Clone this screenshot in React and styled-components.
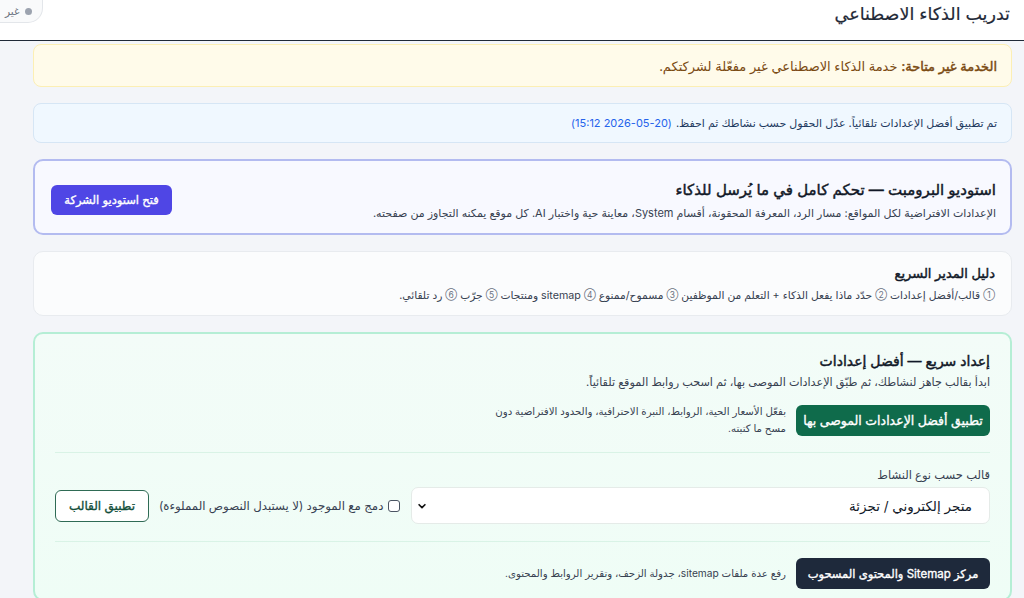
import React from 'react';
import styled, { createGlobalStyle, css } from 'styled-components';

const Global = createGlobalStyle`
  html, body {
    margin: 0;
    padding: 0;
    background: #f3f5f9;
    font-family: Inter, "Noto Sans", "DejaVu Sans", sans-serif;
    color: #1f2937;
  }
  * { box-sizing: border-box; }
`;

// the only Arabic face installed is wide in bold, so fake a semibold on the regular cut
const heavy = css`
  font-weight: 400;
  -webkit-text-stroke: ${p => p.$stroke || 0.45}px currentColor;
`;

const Header = styled.header`
  height: 41px;
  background: #fff;
  border-bottom: 1px solid #1f2937;
  display: flex;
  align-items: flex-start;
  justify-content: space-between;
  padding: 0 14px 0 0;
`;

const Title = styled.h1`
  margin: 3px 0 0;
  font-size: 17.5px;
  font-weight: 400;
  -webkit-text-stroke: 0.2px currentColor;
  color: #1f2937;
`;

const Toggle = styled.div`
  margin-top: -8px;
  height: 31px;
  padding: 8px 10px 0 5px;
  display: flex;
  align-items: center;
  gap: 6px;
  background: #f9fafb;
  border: 1px solid #e3e6ea;
  border-left: none;
  border-radius: 0 0 15px 0;
  font-size: 10.5px;
  color: #6b7280;
`;

const Dot = styled.span`
  width: 7px;
  height: 7px;
  border-radius: 50%;
  background: #9ca3af;
`;

const Main = styled.main`
  padding: 3px 12px 0 33px;
  display: flex;
  flex-direction: column;
  gap: 16px;
`;

const Alert = styled.div`
  height: ${p => p.$h}px;
  border-radius: 8px;
  border: 1px solid ${p => p.$border};
  background: ${p => p.$bg};
  display: flex;
  align-items: center;
  padding: 0 14px;
  font-size: ${p => p.$fs}px;
  color: ${p => p.$color};
`;

const Strong = styled.b`
  ${heavy}
  margin-left: 4px;
`;

const Stamp = styled.span`
  color: #2563eb;
  margin-right: 4px;
`;

const Card = styled.section`
  border-radius: 10px;
  border: ${p => p.$border};
  background: ${p => p.$bg};
  padding: ${p => p.$pad};
  height: ${p => p.$h ? `${p.$h}px` : 'auto'};
  flex-shrink: 0;
`;

const StudioRow = styled.div`
  display: flex;
  align-items: center;
  justify-content: space-between;
`;

const CardTitle = styled.h2`
  ${heavy}
  margin: 0 0 ${p => p.$mb || 6}px;
  font-size: ${p => p.$fs}px;
  color: #111827;
`;

const Sub = styled.p`
  margin: 0;
  font-size: ${p => p.$fs || 11}px;
  color: #374151;
`;

const Num = styled.span`
  font-size: 8.5px;
  color: #6b7280;
  vertical-align: 1px;
`;

const Button = styled.button`
  ${heavy}
  font-family: inherit;
  border: ${p => p.$outline ? '1px solid #2f6b55' : 'none'};
  border-radius: 6px;
  background: ${p => p.$bg};
  color: ${p => p.$outline ? '#134e3a' : '#fff'};
  font-size: ${p => p.$fs || 12}px;
  height: ${p => p.$h || 30}px;
  width: ${p => p.$w}px;
  padding: 0;
  white-space: nowrap;
  cursor: pointer;
  flex-shrink: 0;
`;

const Divider = styled.hr`
  border: none;
  border-top: 1px solid #d9f3e6;
  margin: ${p => p.$m};
`;

const ActionRow = styled.div`
  display: flex;
  align-items: center;
  gap: 10px;
  margin-top: ${p => p.$mt || 0}px;
`;

const Hint = styled.p`
  margin: 0;
  font-size: 10.2px;
  line-height: 17px;
  color: #374151;
  width: ${p => p.$w || 'auto'};
`;

const Label = styled.label`
  display: block;
  font-size: 11.5px;
  color: #374151;
  margin-bottom: 5px;
`;

const TemplateRow = styled.div`
  display: flex;
  align-items: center;
  gap: 10px;
`;

const Select = styled.div`
  flex: 1;
  height: 37px;
  border: 1px solid #e5ebe8;
  border-radius: 7px;
  background: #fff;
  display: flex;
  align-items: center;
  justify-content: space-between;
  padding: 0 17px 0 5px;
  font-size: 13.5px;
  color: #111827;
`;

const Check = styled.span`
  width: 12px;
  height: 12px;
  border: 1px solid #4b5563;
  border-radius: 3px;
  background: #fff;
  flex-shrink: 0;
  margin-right: 1px;
`;

const CheckLabel = styled.span`
  font-size: 11.8px;
  color: #374151;
  margin-left: auto;
  margin-right: -5px;
`;

function Chevron() {
  return (
    <svg width="10" height="10" viewBox="0 0 24 24" fill="none" stroke="#111" strokeWidth="4" strokeLinecap="round" strokeLinejoin="round">
      <path d="M5 9l7 7 7-7" />
    </svg>
  );
}

export default function App() {
  return (
    <div dir="rtl">
      <Global />
      <Header>
        <Title>تدريب الذكاء الاصطناعي</Title>
        <Toggle><Dot />غير</Toggle>
      </Header>
      <Main>
        <Alert $h={43} $bg="#fffbea" $border="#fcefb4" $fs={13} $color="#7a4a12">
          <Strong>الخدمة غير متاحة:</Strong> خدمة الذكاء الاصطناعي غير مفعّلة لشركتكم.
        </Alert>
        <Alert $h={40} $bg="#f0f8ff" $border="#d6e6f5" $fs={11} $color="#1e3a5f">
          تم تطبيق أفضل الإعدادات تلقائياً. عدّل الحقول حسب نشاطك ثم احفظ.
          <Stamp>(2026-05-20 15:12)</Stamp>
        </Alert>
        <Card $border="2px solid #b3bbf0" $bg="#f8f9ff" $pad="19px 14px 0 16px" $h={76}>
          <StudioRow>
            <div>
              <CardTitle $fs={15} $mb={7}>استوديو البرومبت — تحكم كامل في ما يُرسل للذكاء</CardTitle>
              <Sub>الإعدادات الافتراضية لكل المواقع: مسار الرد، المعرفة المحقونة، أقسام System، معاينة حية واختبار AI. كل موقع يمكنه التجاوز من صفحته.</Sub>
            </div>
            <Button $bg="#4f46e5" $w={121} $h={30} $fs={11.5} $stroke={0.35}>فتح استوديو الشركة</Button>
          </StudioRow>
        </Card>
        <Card $border="1px solid #e8ebef" $bg="#fbfcfd" $pad="13px 16px 0" $h={65}>
          <CardTitle $fs={13} $mb={8}>دليل المدير السريع</CardTitle>
          <Sub $fs={10.7}>
            <Num>①</Num> قالب/أفضل إعدادات <Num>②</Num> حدّد ماذا يفعل الذكاء + التعلم من الموظفين <Num>③</Num> مسموح/ممنوع <Num>④</Num> sitemap ومنتجات <Num>⑤</Num> جرّب <Num>⑥</Num> رد تلقائي.
          </Sub>
        </Card>
        <Card $border="2px solid #b5eed5" $bg="linear-gradient(180deg, #f3fcf8, #effdf6)" $pad="18px 20px 10px 20px">
          <CardTitle $fs={14} $mb={6}>إعداد سريع — أفضل إعدادات</CardTitle>
          <Sub $fs={11.2}>ابدأ بقالب جاهز لنشاطك، ثم طبّق الإعدادات الموصى بها، ثم اسحب روابط الموقع تلقائياً.</Sub>
          <ActionRow $mt={14}>
            <Button $bg="#0f6b4b" $w={194} $h={31} $fs={12.5} $stroke={0.35}>تطبيق أفضل الإعدادات الموصى بها</Button>
            <Hint $w="292px">بفعّل الأسعار الحية، الروابط، النبرة الاحترافية، والحدود الافتراضية دون مسح ما كتبته.</Hint>
          </ActionRow>
          <Divider $m="15px 0 15px" />
          <Label>قالب حسب نوع النشاط</Label>
          <TemplateRow>
            <Select>
              <span>متجر إلكتروني / تجزئة</span>
              <Chevron />
            </Select>
            <Check />
            <CheckLabel>دمج مع الموجود (لا يستبدل النصوص المملوءة)</CheckLabel>
            <Button $outline $bg="#fff" $w={94} $h={32} $fs={12} $stroke={0.35}>تطبيق القالب</Button>
          </TemplateRow>
          <Divider $m="17px 0 16px" />
          <ActionRow>
            <Button $bg="#1e293b" $w={194} $h={31} $fs={11.5} $stroke={0.35}>مركز Sitemap والمحتوى المسحوب</Button>
            <Hint>رفع عدة ملفات sitemap، جدولة الزحف، وتقرير الروابط والمحتوى.</Hint>
          </ActionRow>
        </Card>
      </Main>
    </div>
  );
}
